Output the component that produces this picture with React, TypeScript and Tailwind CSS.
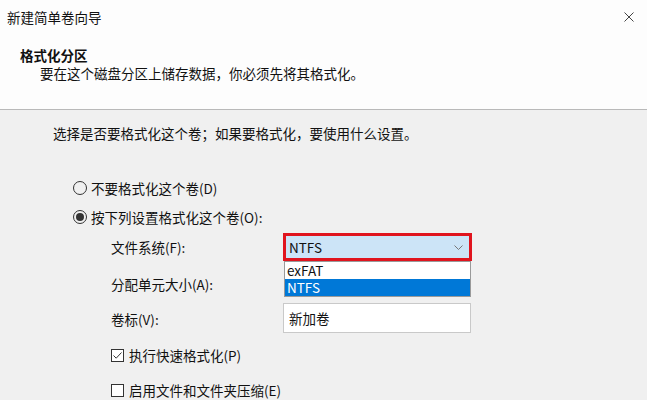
import React from "react";

function Radio({ checked }: { checked?: boolean }) {
  return (
    <span className="flex h-[14px] w-[14px] shrink-0 items-center justify-center rounded-full border border-[#333]">
      {checked && <span className="h-[8px] w-[8px] rounded-full bg-[#333]" />}
    </span>
  );
}

function Checkbox({ checked }: { checked?: boolean }) {
  return (
    <span className="flex h-[13px] w-[13px] shrink-0 items-center justify-center border border-[#333] bg-white">
      {checked && (
        <svg width="11" height="11" viewBox="0 0 11 11" fill="none">
          <path d="M1.5 5.5 L4.2 8.2 L9.5 2.5" stroke="#333" strokeWidth="1" />
        </svg>
      )}
    </span>
  );
}

export default function App() {
  return (
    <div className="relative h-[400px] w-[647px] overflow-hidden bg-[#f0f0f0] font-['Noto_Sans_CJK_SC',sans-serif] text-[13.5px] text-[#111]">
      {/* header */}
      <div className="h-[110px] border-b border-[#b9b9b9] bg-[#fdfdfd]">
        <div className="flex items-center justify-between pl-[7px] pr-[12px] pt-[7px] leading-[20px]">
          <span>新建简单卷向导</span>
          <svg width="10" height="10" viewBox="0 0 10 10" className="mr-[1px]">
            <path d="M0.5 0.5 L9.5 9.5 M9.5 0.5 L0.5 9.5" stroke="#444" strokeWidth="1" />
          </svg>
        </div>
        <div className="mt-[19px] pl-[20px] font-bold leading-[18px]">格式化分区</div>
        <div className="pl-[40px] leading-[18px]">要在这个磁盘分区上储存数据，你必须先将其格式化。</div>
      </div>

      {/* body */}
      <div className="pt-[13px]">
        <div className="pl-[53px] leading-[20px]">选择是否要格式化这个卷；如果要格式化，要使用什么设置。</div>

        <div className="mt-[35px] flex items-center gap-[4px] pl-[73px] leading-[20px]">
          <Radio />
          <span>不要格式化这个卷(D)</span>
        </div>
        <div className="mt-[9px] flex items-center gap-[4px] pl-[73px] leading-[20px]">
          <Radio checked />
          <span>按下列设置格式化这个卷(O):</span>
        </div>

        <div className="pl-[111px]">
          <div className="mt-[6px] flex h-[28px] items-center">
            <span className="w-[172px]">文件系统(F):</span>
            <div className="relative h-[28px] w-[189px]">
              <div className="flex h-full items-center justify-between border-[3px] border-[#e0141e] bg-[#cce4f7] pl-[3px] pr-[6px]">
                <span className="leading-[18px]">NTFS</span>
                <svg width="9" height="5" viewBox="0 0 9 5" fill="none">
                  <path d="M0.5 0.5 L4.5 4.5 L8.5 0.5" stroke="#777" strokeWidth="1" />
                </svg>
              </div>
              <div className="absolute left-[1px] right-[1px] top-[28px] border border-[#9a9a9a] bg-white">
                <div className="pl-[2px] leading-[17px]">exFAT</div>
                <div className="bg-[#0078d7] pl-[2px] leading-[17px] text-white">NTFS</div>
              </div>
            </div>
          </div>

          <div className="mt-[9px] flex h-[28px] items-center">
            <span className="w-[172px]">分配单元大小(A):</span>
          </div>

          <div className="mt-[5px] flex h-[30px] items-center">
            <span className="w-[172px] pt-[3px]">卷标(V):</span>
            <div className="flex h-[30px] w-[188px] items-center border border-[#c9c9c9] bg-white pl-[5px]">
              新加卷
            </div>
          </div>

          <div className="mt-[12px] flex items-center gap-[5px] leading-[20px]">
            <Checkbox checked />
            <span>执行快速格式化(P)</span>
          </div>
          <div className="mt-[15px] flex items-center gap-[5px] leading-[20px]">
            <Checkbox />
            <span>启用文件和文件夹压缩(E)</span>
          </div>
        </div>
      </div>
    </div>
  );
}
